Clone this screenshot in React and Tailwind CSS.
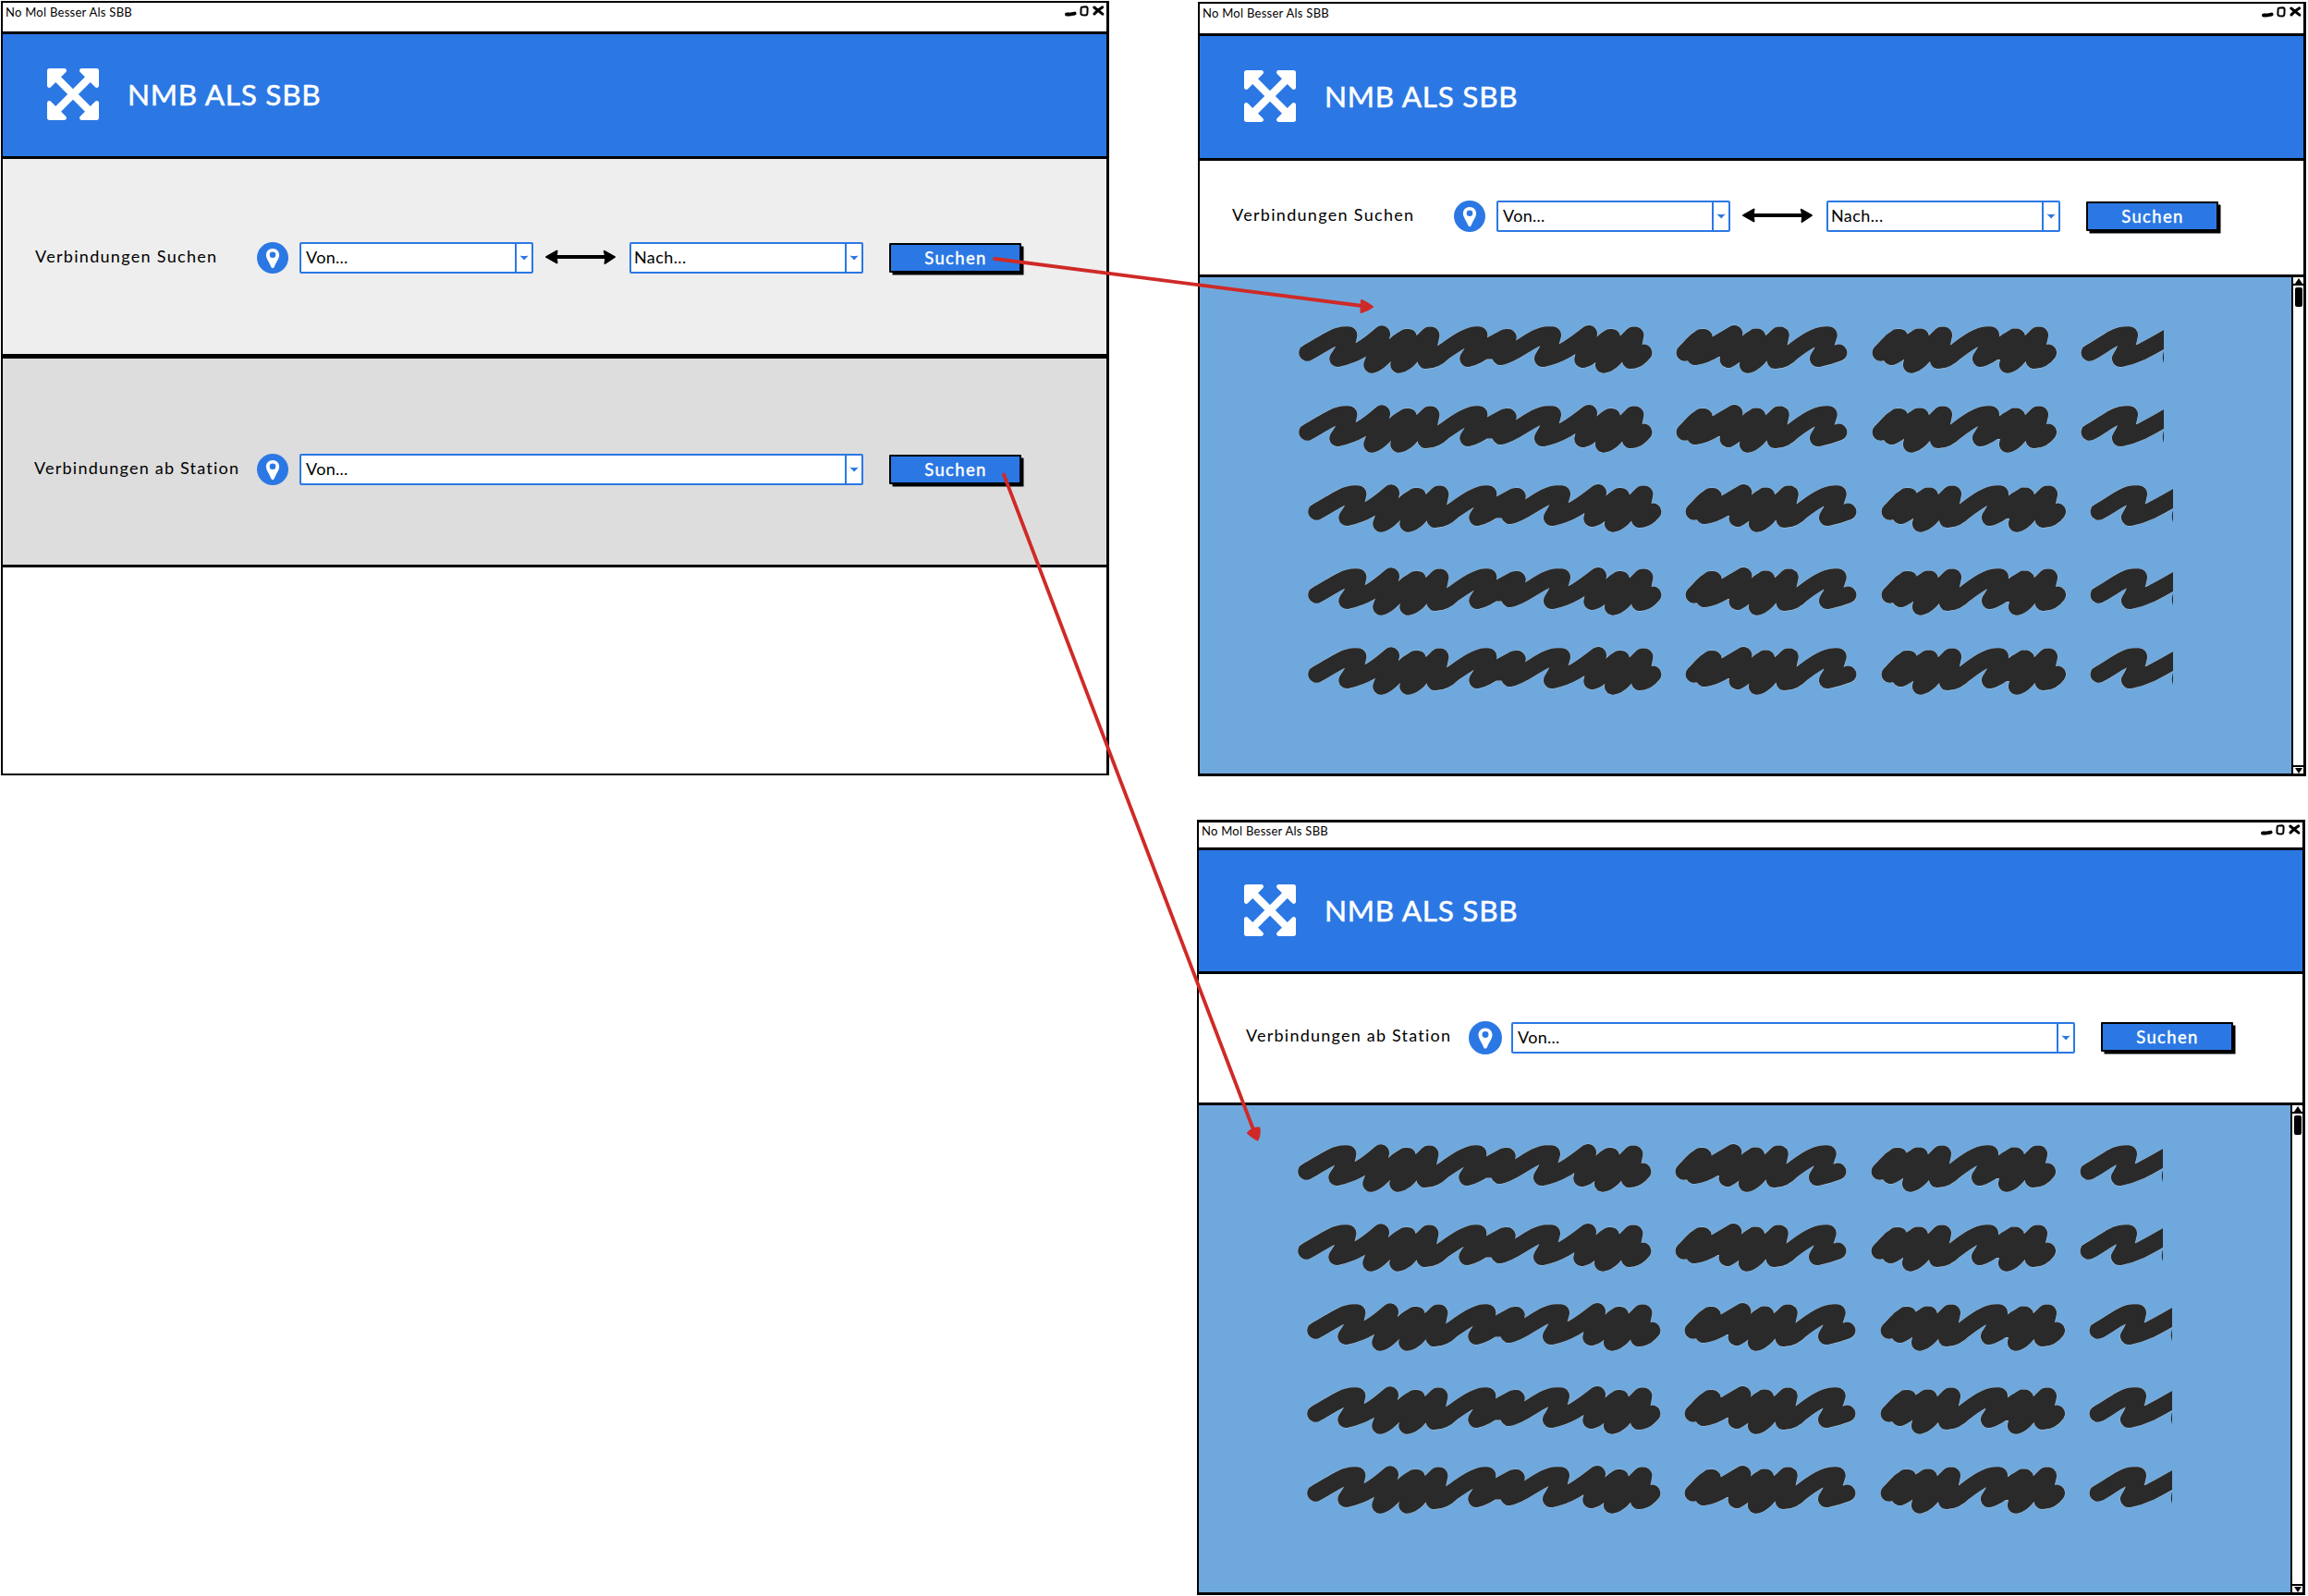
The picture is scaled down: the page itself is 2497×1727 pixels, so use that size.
import React from "react";

function WindowControls() {
  return (
    <svg className="h-3 w-[44px] shrink-0" viewBox="0 0 44 12" fill="none" stroke="#000">
      <path d="M3 9.6 L6 9.6 L11.6 8.6" strokeWidth="4" strokeLinecap="round" />
      <path d="M19.2 1.8 L23.5 1.3 Q25.6 1.4 25.6 3.4 L25.4 8.4 Q25.2 10.4 23.2 10.4 L20.4 10.2 Q18.4 10 18.4 8.2 L18.6 3.2 Q18.6 1.8 19.6 1.8" strokeWidth="2" />
      <path d="M32.8 2 L41.8 9.2 M41.6 1.8 Q37.4 4 33 9" strokeWidth="3" strokeLinecap="round" />
    </svg>
  );
}

function ExpandIcon() {
  return (
    <svg className="h-[56px] w-[56px] shrink-0" viewBox="128 128 1536 1536" fill="#fff">
      <path d="M1411 541l-355 355 355 355 144-144q29-31 70-14 39 17 39 59v448q0 26-19 45t-45 19h-448q-42 0-59-40-17-39 14-69l144-144-355-355-355 355 144 144q31 30 14 69-17 40-59 40h-448q-26 0-45-19t-19-45v-448q0-42 40-59 39-17 69 14l144 144 355-355-355-355-144 144q-19 19-45 19-12 0-24-5-40-17-40-59v-448q0-26 19-45t45-19h448q42 0 59 40 17 39-14 69l-144 144 355 355 355-355-144-144q-31-30-14-69 17-40 59-40h448q26 0 45 19t19 45v448q0 42-39 59-13 5-25 5-26 0-45-19z" />
    </svg>
  );
}

function PinIcon({ className }) {
  return (
    <svg className={className} viewBox="0 0 34 34">
      <circle cx="17" cy="17" r="17" fill="#2b78e4" />
      <path d="M17 7 C12.7 7 9.9 10.2 9.9 14 C9.9 18 13.6 22 15 26.3 Q15.7 28.2 17 28.2 Q18.3 28.2 19 26.3 C20.4 22 24.1 18 24.1 14 C24.1 10.2 21.3 7 17 7 Z" fill="#fff" />
      <circle cx="17" cy="13.8" r="3.3" fill="#2b78e4" />
    </svg>
  );
}

function Select({ text, className, textClass }) {
  return (
    <div className={`flex h-[34px] shrink-0 rounded-[2px] border-2 border-[#2b78e4] bg-white ${className}`}>
      <span className={`flex-1 text-[18px] leading-[29px] ${textClass}`}>{text}</span>
      <span className="flex w-[18px] items-center justify-center border-l-2 border-[#2b78e4]">
        <svg className="h-[6px] w-[10px]" viewBox="0 0 10 6">
          <path d="M0.3 0.6 Q5 1.6 9.7 0.6 L5.2 5.6 Z" fill="#2b78e4" />
        </svg>
      </span>
    </div>
  );
}

function SwapArrow() {
  return (
    <svg className="mb-[2px] ml-[12px] mr-[14px] h-[18px] w-[78px] shrink-0" viewBox="0 0 78 18">
      <path d="M8 9 H70" stroke="#000" strokeWidth="4.2" />
      <path d="M2 9 L13.5 2.6 Q12 9 13.5 15.4 Z M76 9 L64.8 2.8 Q67 9 65.5 16 Z" stroke="#000" strokeWidth="2" strokeLinejoin="round" />
    </svg>
  );
}

function SearchButton({ className }) {
  return (
    <button className={`h-[32px] w-[143px] shrink-0 rounded-[1px] border-2 border-black bg-[#2b78e4] pl-[1px] text-center text-[18.5px] leading-[27px] tracking-[1.35px] text-white shadow-[3px_3px_0_-0.5px_#000] [-webkit-text-stroke:0.4px_#fff] ${className}`}>
      Suchen
    </button>
  );
}

function ConnectionSearch({ className }) {
  return (
    <div className={`flex items-start ${className}`}>
      <span className="w-[240px] shrink-0 text-[18px] leading-[30px] tracking-[1.3px]">Verbindungen Suchen</span>
      <div className="flex items-center">
        <PinIcon className="mr-[12px] h-[34px] w-[34px] shrink-0" />
        <Select text="Von..." className="w-[253px]" textClass="pl-[5px] tracking-[0.3px]" />
        <SwapArrow />
        <Select text="Nach..." className="w-[253px]" textClass="pl-[3px] tracking-[0.4px]" />
      </div>
      <SearchButton className="ml-[28px] mt-px" />
    </div>
  );
}

function StationSearch({ className, gap }) {
  return (
    <div className={`flex items-start ${className}`}>
      <span className="w-[241px] shrink-0 text-[18px] leading-[30px] tracking-[1.22px]">Verbindungen ab Station</span>
      <div className="flex items-center">
        <PinIcon className={gap} />
        <Select text="Von..." className="w-[610px]" textClass="pl-[5px] tracking-[0.3px]" />
      </div>
      <SearchButton className="ml-[28px] mt-px" />
    </div>
  );
}

function TitleBar({ className }) {
  return (
    <div className={`flex items-start justify-between pl-[3px] pr-[2px] ${className}`}>
      <span className="text-[13px] leading-[14px] tracking-[0.27px]">No Mol Besser Als SBB</span>
      <WindowControls />
    </div>
  );
}

function Header({ className }) {
  return (
    <div className={`flex items-center border-y-[3px] border-black bg-[#2b78e4] pb-[2px] ${className}`}>
      <ExpandIcon />
      <span className="ml-[31px] text-[31.5px] leading-[36px] tracking-[0.75px] text-white [-webkit-text-stroke:0.5px_#fff]">NMB ALS SBB</span>
    </div>
  );
}

const SCRIBBLES = [
  "M73 155 C110 138 158 97 195 97 L208 97 Q204 130 172 174 C232 160 262 140 315 94 Q305 135 283 194 C320 185 360 110 402 105 L370 194 C415 185 430 120 475 98 L458 180 Q488 180 515 153 C555 125 590 99 620 97 L631 97 Q622 135 595 174 C650 162 678 115 725 105 L700 168 C750 160 805 100 850 97 L870 97 Q862 135 837 174 C897 162 932 136 987 93 L967 177 C1005 170 1025 112 1062 105 L1035 194 C1080 185 1095 120 1138 98 L1122 180 Q1145 180 1165 155 M283 194 L393 105 L370 194 L468 98 L458 180 M300 150 H475 M610 163 L715 106 M645 148 H700 M967 177 L1055 105 L1035 194 L1130 98 L1122 180 M985 150 H1140",
  "M1298 155 C1320 135 1335 108 1361 105 L1332 168 C1385 160 1415 130 1459 93 L1439 177 C1480 160 1500 108 1534 104 L1503 194 C1545 185 1565 115 1610 98 L1592 180 Q1622 180 1647 153 C1687 122 1722 98 1755 97 L1766 97 Q1756 135 1731 174 Q1765 168 1798 155 M1298 155 L1352 105 L1332 168 L1459 93 L1439 177 L1527 104 L1503 194 L1602 98 L1592 180 M1320 141 H1595 M1450 150 H1595",
  "M1934 155 C1956 135 1971 108 1996 105 L1969 168 C2010 155 2030 108 2064 104 L2034 194 C2076 185 2096 115 2139 98 L2121 180 Q2150 180 2176 153 C2216 122 2250 98 2280 97 L2292 97 Q2285 135 2259 174 C2310 160 2335 112 2376 104 L2346 194 C2385 185 2405 120 2451 98 L2432 180 Q2460 180 2478 155 M1934 155 L1987 105 L1969 168 L2056 104 L2034 194 L2131 98 L2121 180 M1960 147 H2125 M2259 174 L2368 104 L2346 194 L2443 98 L2432 180 M2290 150 H2455",
  "M2612 155 C2650 138 2690 97 2728 97 L2742 97 Q2736 135 2712 174 C2772 162 2805 140 2880 97",
];

function ScribbleRow({ className }) {
  return (
    <svg className={`h-[55px] w-[937px] shrink-0 ${className}`} viewBox="42 60 2811 165" fill="none" strokeLinecap="round" strokeLinejoin="round">
      {SCRIBBLES.map((d) => (
        <path key={`edge-${d}`} d={d} stroke="#dfe9f2" strokeOpacity="0.6" strokeWidth="56.5" />
      ))}
      {SCRIBBLES.map((d) => (
        <path key={d} d={d} stroke="#2a2a2a" strokeWidth="54.5" />
      ))}
      <path d="M2853 151 Q2846 170 2853 189 Z" fill="#2a2a2a" />
    </svg>
  );
}

function Scrollbar() {
  return (
    <div className="flex w-[13px] shrink-0 flex-col items-center justify-between border-l-[2px] border-black bg-white">
      <div className="flex w-full flex-col items-center">
        <div className="flex h-[9px] w-full items-center justify-center border-b-2 border-black">
          <svg className="h-[6px] w-[8px]" viewBox="0 0 8 6"><path d="M4 0 L8 6 H0 Z" /></svg>
        </div>
        <div className="mt-[2px] h-[21px] w-[8px] rounded-[2px] bg-black" />
      </div>
      <div className="flex h-[9px] w-full items-center justify-center border-t-2 border-black">
        <svg className="h-[6px] w-[8px]" viewBox="0 0 8 6"><path d="M0 0 H8 L4 6 Z" /></svg>
      </div>
    </div>
  );
}

function Results({ listClass }) {
  return (
    <div className="flex flex-1 border-t-[3px] border-black bg-[#6fa8dc]">
      <div className={`flex flex-1 flex-col ${listClass}`}>
        <ScribbleRow className="ml-[106px]" />
        <ScribbleRow className="ml-[106px] mt-[31px]" />
        <ScribbleRow className="ml-[116px] mt-[31px]" />
        <ScribbleRow className="ml-[116px] mt-[35px]" />
        <ScribbleRow className="ml-[116px] mt-[31px]" />
      </div>
      <Scrollbar />
    </div>
  );
}

function FlowArrows() {
  return (
    <svg className="pointer-events-none absolute inset-0 h-[1727px] w-[2497px]" viewBox="0 0 2497 1727" fill="#cf2a27" stroke="#cf2a27" strokeLinecap="round" strokeLinejoin="round">
      <path d="M1076 280 L1474 331" strokeWidth="3.8" fill="none" />
      <path d="M1473 325 Q1480 328 1485 332 Q1480 336 1472.5 338 Z" strokeWidth="2" />
      <path d="M1086 513.5 L1357 1225" strokeWidth="3.8" fill="none" />
      <path d="M1350 1226 Q1355 1220 1362.5 1220.5 Q1363.5 1228 1360.5 1233.5 Q1355 1231 1350 1226 Z" strokeWidth="2" />
    </svg>
  );
}

export default function App() {
  return (
    <div className="relative flex h-[1727px] w-[2497px] items-start overflow-hidden bg-white font-['Lato',sans-serif] text-black">
      <section className="ml-px mt-px flex h-[838px] w-[1199px] flex-col border-2 border-r-[3px] border-black">
        <TitleBar className="h-[31px] pt-[3px]" />
        <Header className="h-[138px] pl-[48px]" />
        <ConnectionSearch className="h-[211px] bg-[#eeeeee] pl-[35px] pt-[90px]" />
        <div className="h-[231px] border-b-[3px] border-t-[5px] border-black bg-[#dddddd] pl-[34px] pt-[103px]">
          <StationSearch gap="mr-[12px] h-[34px] w-[34px] shrink-0" />
        </div>
      </section>

      <div className="ml-[95px] flex flex-col items-start">
        <section className="ml-px mt-[2px] flex h-[838px] w-[1199px] flex-col border-2 border-b-[3px] border-r-[3px] border-black">
          <TitleBar className="h-[32px] pt-[3px]" />
          <Header className="h-[138px] pl-[48px]" />
          <ConnectionSearch className="h-[123px] pl-[35px] pt-[43px]" />
          <Results listClass="pt-[50px]" />
        </section>

        <section className="mt-[47px] flex h-[839px] w-[1199px] flex-col border-2 border-b-[3px] border-r-[3px] border-t-[3px] border-black">
          <TitleBar className="h-[27px] pt-[2px]" />
          <Header className="h-[137px] pl-[49px]" />
          <StationSearch className="h-[139px] pl-[51px] pt-[51px]" gap="-mb-px mr-[10px] h-[36px] w-[36px] shrink-0" />
          <Results listClass="pt-[40px]" />
        </section>
      </div>

      <FlowArrows />
    </div>
  );
}
